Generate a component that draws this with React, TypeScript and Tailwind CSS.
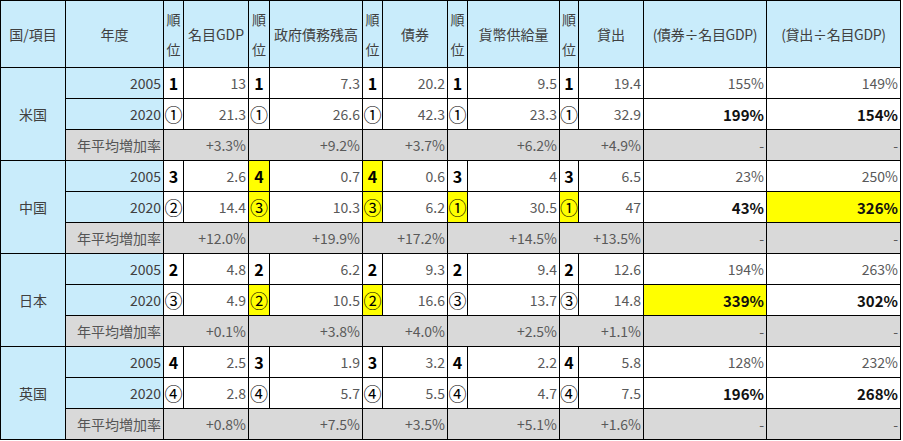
import React from "react";

type C = { t: string; y?: boolean; b?: boolean };

type Group = {
  name: string;
  r05: C[];
  r20: C[];
  g: string[];
};

const c = (t: string, y = false, b = false): C => ({ t, y, b });

const groups: Group[] = [
  {
    name: "米国",
    r05: [c("1"), c("13"), c("1"), c("7.3"), c("1"), c("20.2"), c("1"), c("9.5"), c("1"), c("19.4"), c("155%"), c("149%")],
    r20: [c("①"), c("21.3"), c("①"), c("26.6"), c("①"), c("42.3"), c("①"), c("23.3"), c("①"), c("32.9"), c("199%", false, true), c("154%", false, true)],
    g: ["+3.3%", "+9.2%", "+3.7%", "+6.2%", "+4.9%"],
  },
  {
    name: "中国",
    r05: [c("3"), c("2.6"), c("4", true), c("0.7"), c("4", true), c("0.6"), c("3"), c("4"), c("3"), c("6.5"), c("23%"), c("250%")],
    r20: [c("②"), c("14.4"), c("③", true), c("10.3"), c("③", true), c("6.2"), c("①", true), c("30.5"), c("①", true), c("47"), c("43%", false, true), c("326%", true, true)],
    g: ["+12.0%", "+19.9%", "+17.2%", "+14.5%", "+13.5%"],
  },
  {
    name: "日本",
    r05: [c("2"), c("4.8"), c("2"), c("6.2"), c("2"), c("9.3"), c("2"), c("9.4"), c("2"), c("12.6"), c("194%"), c("263%")],
    r20: [c("③"), c("4.9"), c("②", true), c("10.5"), c("②", true), c("16.6"), c("③"), c("13.7"), c("③"), c("14.8"), c("339%", true, true), c("302%", false, true)],
    g: ["+0.1%", "+3.8%", "+4.0%", "+2.5%", "+1.1%"],
  },
  {
    name: "英国",
    r05: [c("4"), c("2.5"), c("3"), c("1.9"), c("3"), c("3.2"), c("4"), c("2.2"), c("4"), c("5.8"), c("128%"), c("232%")],
    r20: [c("④"), c("2.8"), c("④"), c("5.7"), c("④"), c("5.5"), c("④"), c("4.7"), c("④"), c("7.5"), c("196%", false, true), c("268%", false, true)],
    g: ["+0.8%", "+7.5%", "+3.5%", "+5.1%", "+1.6%"],
  },
];

const widths = [65, 98, 20, 65, 21, 93, 20, 65, 20, 92, 19, 65, 123, 134];

const bd = "border border-black";

function DataCells({ cells, circled }: { cells: C[]; circled: boolean }) {
  return (
    <>
      {cells.map((cell, i) => {
        const isRank = i < 10 && i % 2 === 0;
        const bg = cell.y ? "bg-[#ffff00]" : "bg-white";
        if (isRank) {
          return (
            <td
              key={i}
              className={`${bd} ${bg} p-0 text-center ${
                circled ? "font-normal text-black text-[18px]" : "font-bold text-black text-[16px]"
              }`}
            >
              {cell.t}
            </td>
          );
        }
        return (
          <td
            key={i}
            className={`${bd} ${bg} px-[2px] py-0 text-right ${
              cell.b ? "font-bold text-[#111] text-[15px]" : "text-[#595959]"
            }`}
          >
            {cell.t}
          </td>
        );
      })}
    </>
  );
}

export default function App() {
  const th = `${bd} font-normal p-0 whitespace-nowrap`;
  return (
    <div
      className="bg-white w-[903px] h-[441px] overflow-hidden"
      style={{ fontFamily: '"Noto Sans CJK JP", "Noto Sans", sans-serif' }}
    >
      <table className="border-collapse table-fixed w-[900px] text-[14px] leading-none">
        <colgroup>
          {widths.map((w, i) => (
            <col key={i} style={{ width: w }} />
          ))}
        </colgroup>
        <thead>
          <tr className="h-[67px] bg-[#c9ecfb] text-[#404040]">
            <th className={th}>国/項目</th>
            <th className={th}>年度</th>
            <th className={`${th} leading-[30px]`}>順<br />位</th>
            <th className={th}>名目GDP</th>
            <th className={`${th} leading-[30px]`}>順<br />位</th>
            <th className={th}>政府債務残高</th>
            <th className={`${th} leading-[30px]`}>順<br />位</th>
            <th className={th}>債券</th>
            <th className={`${th} leading-[30px]`}>順<br />位</th>
            <th className={th}>貨幣供給量</th>
            <th className={`${th} leading-[30px]`}>順<br />位</th>
            <th className={th}>貸出</th>
            <th className={`${th} tracking-[-0.3px]`}>(債券÷名目GDP)</th>
            <th className={`${th} tracking-[-0.3px]`}>(貸出÷名目GDP)</th>
          </tr>
        </thead>
        <tbody>
          {groups.map((g) => (
            <React.Fragment key={g.name}>
              <tr className="h-[31px]">
                <td rowSpan={3} className={`${bd} bg-[#c9ecfb] text-center text-[#404040] p-0`}>
                  {g.name}
                </td>
                <td className={`${bd} bg-[#c9ecfb] text-right text-[#404040] px-[2px] py-0`}>2005</td>
                <DataCells cells={g.r05} circled={false} />
              </tr>
              <tr className="h-[31px]">
                <td className={`${bd} bg-[#c9ecfb] text-right text-[#404040] px-[2px] py-0`}>2020</td>
                <DataCells cells={g.r20} circled={true} />
              </tr>
              <tr className="h-[31px] bg-[#d9d9d9]">
                <td className={`${bd} text-right text-[#555] px-[2px] py-0 whitespace-nowrap`}>年平均増加率</td>
                {g.g.map((v, i) => (
                  <td key={i} colSpan={2} className={`${bd} text-right text-[#595959] px-[2px] py-0`}>
                    {v}
                  </td>
                ))}
                <td className={`${bd} text-right text-[#595959] px-[2px] py-0`}>-</td>
                <td className={`${bd} text-right text-[#595959] px-[2px] py-0`}>-</td>
              </tr>
            </React.Fragment>
          ))}
        </tbody>
      </table>
    </div>
  );
}
